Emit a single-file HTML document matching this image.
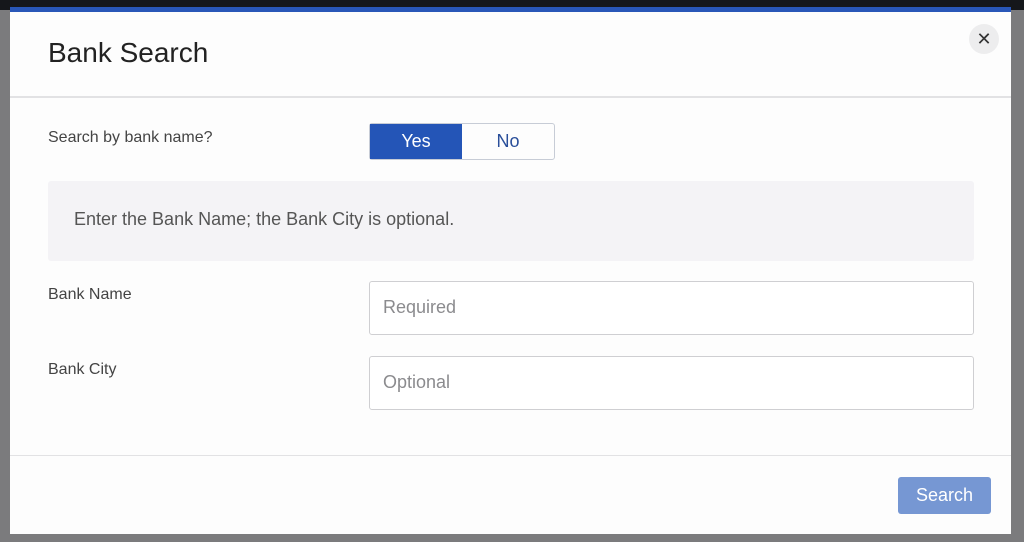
<!DOCTYPE html>
<html><head><style>
body{margin:0;width:1024px;height:542px;overflow:hidden;background:#7b7b7d;font-family:"Liberation Sans",sans-serif;position:relative}
.top{position:absolute;left:0;top:0;width:1024px;height:10px;background:#15171b}
.blue{position:absolute;left:10px;top:7px;width:1001px;height:5px;background:#2957b8}
.modal{position:absolute;left:10px;top:12px;width:1001px;height:522px;background:#fdfdfd}
.t{position:absolute;left:38px;top:25px;font-size:28px;color:#222}
.x{position:absolute;left:959px;top:12px;width:30px;height:30px;border-radius:50%;background:#ededee;color:#333;font-size:18px;text-align:center;line-height:30px}
.hr{position:absolute;left:0;width:1001px;height:2px;background:#e2e2e4}
.lbl{position:absolute;left:38px;font-size:16px;color:#444}
.tog{position:absolute;left:359px;top:111px;width:186px;height:37px;border:1px solid #c7ccd6;border-radius:3px;box-sizing:border-box;display:flex;font-size:18px}
.tog div{flex:1;text-align:center;line-height:35px;color:#2a4f9a}
.tog .on{background:#2455b7;color:#fff}
.info{position:absolute;left:38px;top:169px;width:926px;height:80px;background:#f4f3f6;border-radius:3px;font-size:18px;color:#555;box-sizing:border-box;padding:28px 0 0 26px}
.in{position:absolute;left:359px;width:605px;height:54px;border:1px solid #cfcfd2;border-radius:3px;box-sizing:border-box;font-size:18px;color:#8b8b8e;padding:15px 0 0 13px;background:#fff}
.btn{position:absolute;left:888px;top:465px;width:93px;height:37px;background:#7697d3;border-radius:3px;color:#fff;font-size:18px;text-align:center;line-height:37px}
</style></head><body>
<div class="top"></div><div class="blue"></div>
<div class="modal">
<div class="t">Bank Search</div>
<div class="x">✕</div>
<div class="hr" style="top:84px"></div>
<div class="lbl" style="top:117px">Search by bank name?</div>
<div class="tog"><div class="on">Yes</div><div>No</div></div>
<div class="info">Enter the Bank Name; the Bank City is optional.</div>
<div class="lbl" style="top:274px">Bank Name</div>
<div class="in" style="top:269px">Required</div>
<div class="lbl" style="top:349px">Bank City</div>
<div class="in" style="top:344px">Optional</div>
<div class="hr" style="top:443px;height:1px"></div>
<div class="btn">Search</div>
</div>
</body></html>
